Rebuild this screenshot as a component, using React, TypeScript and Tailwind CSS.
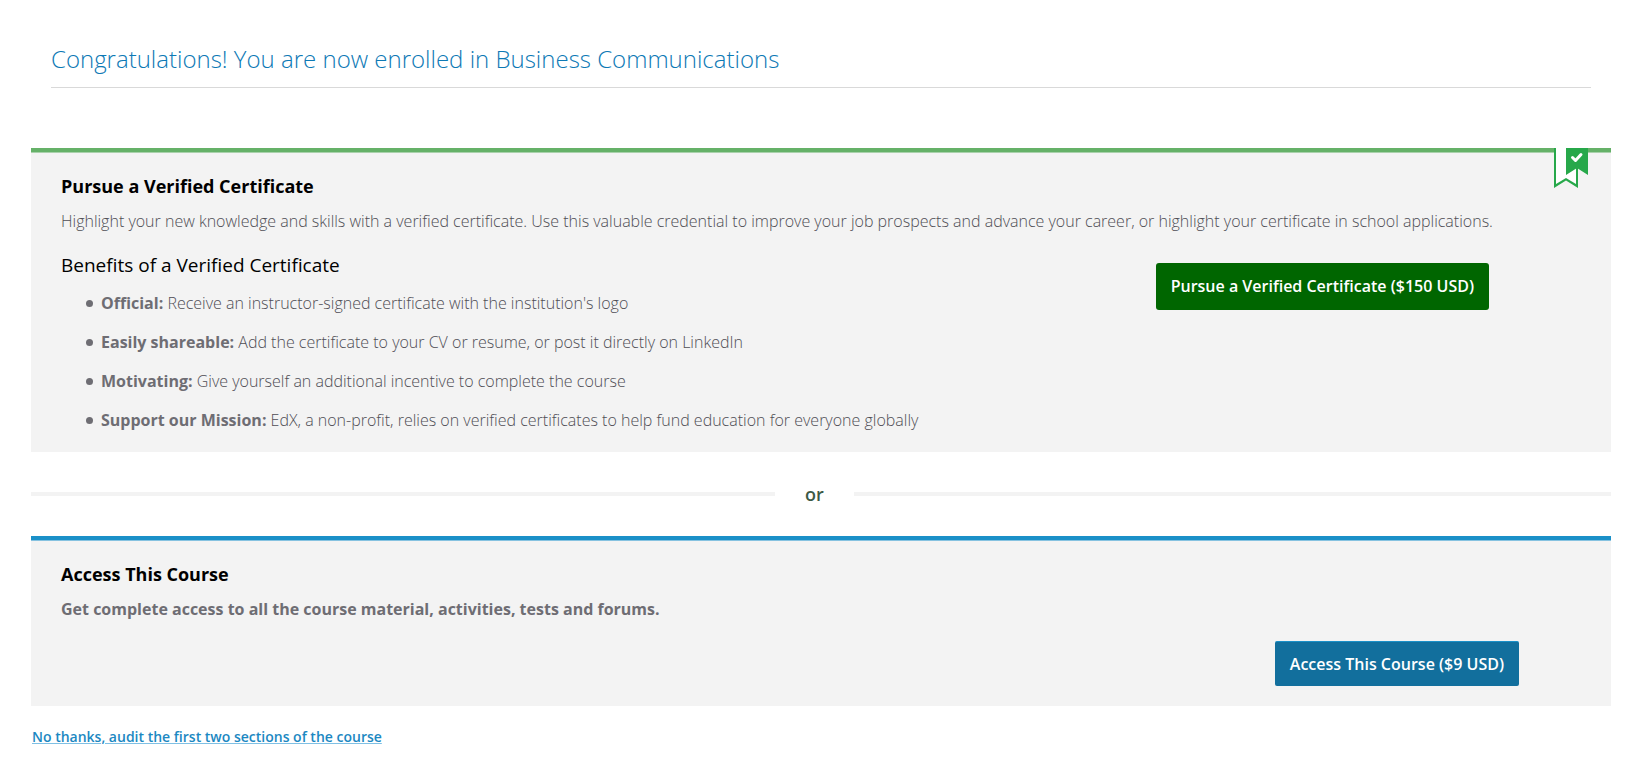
const benefits = [
  ["Official:", "Receive an instructor-signed certificate with the institution's logo"],
  ["Easily shareable:", "Add the certificate to your CV or resume, or post it directly on LinkedIn"],
  ["Motivating:", "Give yourself an additional incentive to complete the course"],
  ["Support our Mission:", "EdX, a non-profit, relies on verified certificates to help fund education for everyone globally"],
];

function Ribbon() {
  return (
    <svg className="absolute -top-1 right-[23px] h-10 w-[34px]" viewBox="0 0 34 40" aria-hidden="true">
      <path d="M0 0h24v40l-12-7.500-12 7.500z" fill="#27a84a" />
      <path d="M2 0h20v36l-10-6-10 6z" fill="#fff" />
      <path d="M12 0h22v27l-11-7-11 7z" fill="#27a84a" />
      <path d="M18.500 9.500l3 3 5.500-6" fill="none" stroke="#fff" strokeWidth="3" strokeLinecap="round" strokeLinejoin="round" />
    </svg>
  );
}

export default function App() {
  return (
    <main className="min-h-screen bg-white pt-[43px] pr-7 pb-8 pl-[31px] font-['Open_Sans',sans-serif] text-[#6e6d73]">
      <header className="mx-5 border-b border-[#d9d9d9] pb-3">
        <h1 className="text-[24px] leading-8 font-light text-[#0d79b5]">Congratulations! You are now enrolled in Business Communications</h1>
      </header>
      <section className="relative mt-[60px] border-t-4 border-[#65b168] bg-[#f3f3f3] px-[30px] pt-5 pb-5 shadow-[inset_0_1px_0_#a9d1ab]">
        <Ribbon />
        <h2 className="text-[18px] leading-7 font-bold text-black">Pursue a Verified Certificate</h2>
        <p className="mt-[9px] text-[16px] leading-6 font-light text-[#4f4e55]">Highlight your new knowledge and skills with a verified certificate. Use this valuable credential to improve your job prospects and advance your career, or highlight your certificate in school applications.</p>
        <div className="mt-4 flex items-start justify-between">
          <div>
            <h3 className="text-[19px] leading-8 text-black">Benefits of a Verified Certificate</h3>
            <ul className="mt-[10px] ml-[25px] space-y-[15px] text-[16px] leading-6 font-light text-[#4f4e55]">
              {benefits.map(([name, text]) => (
                <li key={name} className="flex items-center gap-2 before:size-[7px] before:shrink-0 before:rounded-full before:bg-[#6e6d73]">
                  <span><strong className="font-bold text-[#6e6d73]">{name}</strong> {text}</span>
                </li>
              ))}
            </ul>
          </div>
          <button type="button" className="mt-[14px] mr-[92px] h-[47px] shrink-0 rounded-[3px] bg-[#006600] px-[15px] pb-px text-[16px] font-semibold text-white">Pursue a Verified Certificate ($150 USD)</button>
        </div>
      </section>
      <div className="flex h-[84px] items-center gap-[30px]">
        <span className="h-1 w-[calc(50%-46px)] bg-[#f3f3f3]" />
        <span className="text-[18px] font-semibold text-[#3c5a46]">or</span>
        <span className="h-1 flex-1 bg-[#f3f3f3]" />
      </div>
      <section className="border-t-4 border-[#1a90c8] bg-[#f3f3f3] px-[30px] pt-5 pb-5 shadow-[inset_0_1px_0_#86c2e0]">
        <h2 className="text-[18px] leading-7 font-bold text-black">Access This Course</h2>
        <p className="mt-[9px] text-[16px] leading-6 font-bold">Get complete access to all the course material, activities, tests and forums.</p>
        <div className="mt-5 flex justify-end pr-[62px]">
          <button type="button" className="h-[45px] rounded-[2px] border-t border-[#1a90c8] bg-[#126f9d] px-[15px] text-[16px] font-semibold text-white">Access This Course ($9 USD)</button>
        </div>
      </section>
      <a href="#audit" className="mt-[19px] ml-px inline-block text-[14px] leading-6 font-semibold text-[#1c88c2] underline decoration-[#7fc0e4]">No thanks, audit the first two sections of the course</a>
    </main>
  );
}
